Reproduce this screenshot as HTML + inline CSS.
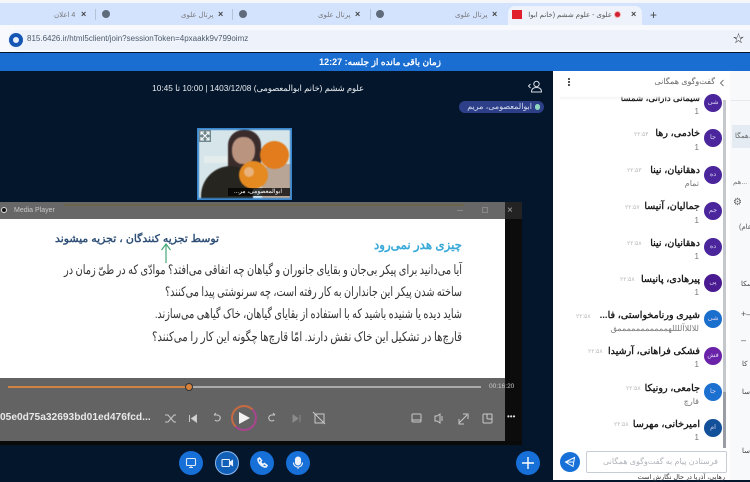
<!DOCTYPE html>
<html lang="fa"><head><meta charset="utf-8"><style>
*{box-sizing:border-box}
html,body{margin:0;padding:0;width:750px;height:480px;overflow:hidden;background:#04162c;font-family:"Liberation Sans","Noto Sans CJK SC",sans-serif}
.a{position:absolute}
.t{position:absolute;white-space:nowrap;line-height:1}
.r{direction:rtl;text-align:right}
.av{position:absolute;left:704px;width:18px;height:18px;border-radius:50%;background:#4b259c;color:#d8d0f0;font-size:6.5px;text-align:center;line-height:18px;direction:rtl}
.nm{position:absolute;right:50px;font-size:9.600px;font-weight:bold;color:#1d1d1d;direction:rtl;white-space:nowrap;line-height:11px}
.sub{position:absolute;right:51px;font-size:8px;color:#777;direction:rtl;white-space:nowrap;line-height:10px}
.tm{position:absolute;font-size:6px;color:#bbb;white-space:nowrap;line-height:8px}
.btn{position:absolute;top:451px;width:24px;height:24px;border-radius:50%;background:#1670d8}
.tab{position:absolute;font-size:7px;color:#777;direction:rtl;white-space:nowrap;top:11px;line-height:9px}
.x{position:absolute;top:9px;font-size:9px;color:#444;line-height:11px;font-weight:bold}
.g{position:absolute;top:10px;width:8px;height:8px;border-radius:50%;background:#5f6b7a}
.sep{position:absolute;top:9px;width:1px;height:11px;background:#b5c3d8}
</style></head><body>

<div class="a" style="left:0;top:0;width:750px;height:3px;background:#f4f6fa"></div>
<div class="a" style="left:0;top:3px;width:750px;height:22px;background:#d3e3fd"></div>
<div class="a" style="left:508px;top:6px;width:134px;height:20px;background:#eef3fb;border-radius:7px 7px 0 0"></div>
<div class="a" style="left:0;top:25px;width:750px;height:27px;background:#f7f9fd"></div>
<div class="a" style="left:8px;top:30px;width:742px;height:20px;background:#eef3fb;border-radius:10px 0 0 10px"></div>

<div class="tab" style="left:54px">4 اعلان</div><div class="x" style="left:81px">×</div><div class="g" style="left:102px"></div><div class="sep" style="left:95px"></div>
<div class="tab" style="left:181px">پرتال علوی</div><div class="x" style="left:218px">×</div><div class="g" style="left:239px"></div><div class="sep" style="left:232px"></div>
<div class="tab" style="left:318px">پرتال علوی</div><div class="x" style="left:355px">×</div><div class="g" style="left:376px"></div><div class="sep" style="left:370px"></div>
<div class="tab" style="left:455px">پرتال علوی</div><div class="x" style="left:492px">×</div>
<div class="a" style="left:512px;top:10px;width:10px;height:9px;background:#e0202c"></div>
<div class="tab" style="left:528px;color:#555;width:84px;overflow:hidden">علوی - علوم ششم (خانم ابوا</div>
<div class="a" style="left:614px;top:11px;width:7px;height:7px;border-radius:50%;background:#d02030;border:1.500px solid #f0b0b0"></div>
<div class="x" style="left:631px">×</div>
<div class="t" style="left:650px;top:9px;font-size:12px;color:#444">+</div>

<div class="a" style="left:9px;top:33px;width:14px;height:14px;border-radius:50%;background:#1657b5"></div>
<div class="a" style="left:13px;top:37px;width:6px;height:6px;border-radius:50%;background:#e8f0ff"></div>
<div class="t" style="left:27px;top:35px;font-size:8px;color:#4d5a6b">815.6426.ir/html5client/join?sessionToken=4pxaakk9v799oimz</div>
<div class="t" style="left:733px;top:34px;font-size:11px;color:#333">☆</div>

<div class="a" style="left:0;top:53px;width:750px;height:18px;background:#1a6ed2"></div>
<div class="t r" style="left:241px;width:200px;top:58px;font-size:9px;font-weight:bold;color:#fff">زمان باقی مانده از جلسه: 12:27</div>

<div class="t r" style="left:140px;width:224px;top:84px;font-size:8.300px;color:#e8ecf0">علوم ششم (خانم ابوالمعصومی) 1403/12/08 | 10:00 تا 10:45</div>
<svg class="a" style="left:527px;top:80px" width="16" height="14" viewBox="0 0 16 14" fill="none" stroke="#d5dbe3" stroke-width="1"><circle cx="9.500" cy="4" r="2.700"/><path d="M4.500 12c0-3 2-4.500 5-4.500s5 1.500 5 4.500zM3.500 4l-2 2 2 2"/></svg>
<div class="a" style="left:459px;top:101px;width:85px;height:12px;border-radius:6px;background:#2c3f88"></div>
<div class="t r" style="left:462px;width:70px;top:103px;font-size:8px;color:#d8def0">ابوالمعصومی، مریم</div>
<div class="a" style="left:535px;top:104px;width:5px;height:6px;border-radius:3px;background:#8fd8c0"></div>

<!-- Video tile -->
<div class="a" style="left:197px;top:128px;width:95px;height:72px;background:#3a86cc"></div>
<div class="a" style="left:199px;top:130px;width:91px;height:68px;background:#d5e5ea;overflow:hidden;filter:blur(.6px)">
  <div class="a" style="left:29px;top:0;width:33px;height:46px;border-radius:15px 15px 4px 4px;background:#3b2c2c"></div>
  <div class="a" style="left:33px;top:7px;width:23px;height:27px;border-radius:45%;background:#bb9480"></div>
  <div class="a" style="left:2px;top:36px;width:52px;height:36px;border-radius:30px 22px 0 0;background:#27251f"></div>
  <div class="a" style="left:63px;top:34px;width:28px;height:36px;border-radius:40% 0 0 0;background:#b9a596"></div>
  <div class="a" style="left:61px;top:11px;width:29px;height:28px;border-radius:50%;background:#e27c1c"></div>
  <div class="a" style="left:40px;top:31px;width:29px;height:28px;border-radius:50%;background:#e48a20"></div>
  <div class="a" style="left:45px;top:37px;width:10px;height:10px;border-radius:50%;background:#e9b27c"></div>
  <div class="a" style="left:5px;top:26px;width:24px;height:7px;background:#e4ecec"></div>
</div>
<svg class="a" style="left:199px;top:130px" width="12" height="12" fill="none" stroke="#fff" stroke-width="1.100"><rect width="12" height="12" fill="#6f8890" stroke="none"/><path d="M2 2l8 8M10 2l-8 8M2 5V2h3M7 2h3v3M2 7v3h3M7 10h3V7"/></svg>
<div class="a" style="left:228px;top:188px;width:62px;height:8px;background:rgba(0,0,0,.75)"></div>
<div class="t r" style="left:230px;width:52px;top:189px;font-size:6px;color:#fff">ابوالمعصومی، مر...</div>

<!-- Media player -->
<div class="a" style="left:0;top:202px;width:505px;height:17px;background:#676767"></div>
<div class="a" style="left:64px;top:204px;width:400px;height:2px;background:#6b634a"></div>
<div class="a" style="left:505px;top:202px;width:17px;height:17px;background:#232323"></div>
<div class="a" style="left:505px;top:219px;width:17px;height:226px;background:#0c0c0c"></div>
<div class="a" style="left:1px;top:207px;width:6px;height:6px;border-radius:50%;background:#111;border:1px solid #ddd"></div>
<div class="t" style="left:14px;top:207px;font-size:7px;color:#c8c8c8">Media Player</div>
<div class="t" style="left:507px;top:206px;font-size:10px;color:#aaa">×</div>
<div class="a" style="left:482px;top:207px;width:6px;height:6px;border:1px solid #888"></div>
<div class="a" style="left:457px;top:210px;width:6px;height:1px;background:#888"></div>

<div class="a" style="left:0;top:219px;width:505px;height:159px;background:#fff"></div>
<svg class="a" style="left:0;top:219px" width="505" height="159" viewBox="0 219 505 159" font-family="'Liberation Serif',serif" fill="#333" font-size="13">
  <text x="219" y="242" direction="rtl" textLength="164" lengthAdjust="spacingAndGlyphs" font-family="'Liberation Sans',sans-serif" font-weight="bold" font-size="10.500" fill="#2f4f77">توسط تجزیه کنندگان ، تجزیه میشوند</text>
  <text x="462" y="249" direction="rtl" textLength="88" lengthAdjust="spacingAndGlyphs" font-family="'Liberation Sans',sans-serif" font-weight="bold" font-size="12.500" fill="#38a9d8">چیزی هدر نمی‌رود</text>
  <text x="462" y="274" direction="rtl" textLength="398" lengthAdjust="spacingAndGlyphs">آیا می‌دانید برای پیکر بی‌جان و بقایای جانوران و گیاهان چه اتفاقی می‌افتد؟ موادّی که در طیّ زمان در</text>
  <text x="462" y="296" direction="rtl" textLength="297" lengthAdjust="spacingAndGlyphs">ساخته شدن پیکر این جانداران به کار رفته است، چه سرنوشتی پیدا می‌کنند؟</text>
  <text x="462" y="318" direction="rtl" textLength="307" lengthAdjust="spacingAndGlyphs">شاید دیده یا شنیده باشید که با استفاده از بقایای گیاهان، خاک گیاهی می‌سازند.</text>
  <text x="462" y="341" direction="rtl" textLength="310" lengthAdjust="spacingAndGlyphs">قارچ‌ها در تشکیل این خاک نقش دارند. امّا قارچ‌ها چگونه این کار را می‌کنند؟</text>
  <path d="M166 263V244M161.500 250 166 244l4.500 6" fill="none" stroke="#45a878" stroke-width="1.200"/>
</svg>

<div class="a" style="left:0;top:378px;width:505px;height:63px;background:#636363"></div>
<div class="a" style="left:0;top:441px;width:522px;height:4px;background:#0a0a0a"></div>
<div class="a" style="left:8px;top:386px;width:181px;height:2px;background:#d08240"></div>
<div class="a" style="left:189px;top:386px;width:292px;height:2px;background:#aaa"></div>
<div class="a" style="left:185px;top:383px;width:8px;height:8px;border-radius:50%;background:#d8823c;border:1px solid #333"></div>
<div class="t" style="left:489px;top:384px;font-size:6.500px;color:#ccc">00:16:20</div>
<div class="t" style="left:0;top:413px;font-size:10.200px;font-weight:bold;color:#e8e8e8">05e0d75a32693bd01ed476fcd...</div>

<svg class="a" style="left:160px;top:406px" width="360" height="26" viewBox="160 406 360 26" fill="none" stroke="#c8c8c8" stroke-width="1">
<path d="M165 415h3l6 7h2M165 422h3l6-7h2"/>
<path d="M189.500 415v7M196.500 415l-5 3.500 5 3.500z" fill="#d5d5d5"/>
<path d="M214 415h3a3 3 0 1 1-2 5M214 415l2-2"/>
<path d="M275 415h-3a3 3 0 1 0 2 5M275 415l-2-2"/>
<path d="M293 415l5 3.500-5 3.500z" fill="#8a8a8a" stroke="#8a8a8a"/><path d="M300 415v7" stroke="#8a8a8a"/>
<path d="M315 414h9v9h-9zM313 412l12 12"/>
<rect x="412" y="414" width="9" height="8" rx="1"/><path d="M412 420h9"/>
<path d="M435 416h2l3-2v9l-3-2h-2zM442 416v5"/>
<path d="M459 423l8-8M463 414h5v5M459 419v5h5"/>
<rect x="483" y="414" width="9" height="9" rx="1"/><rect x="487" y="414" width="5" height="5" rx="1"/>
</svg>
<div class="t" style="left:507px;top:413px;font-size:8px;color:#ddd">•••</div>

<div class="a" style="left:231px;top:405px;width:26px;height:26px;border-radius:50%;border:2.200px solid #c86a42;border-right-color:#a8458e;border-bottom-color:#a8458e"></div>
<svg class="a" style="left:238px;top:411px" width="14" height="14"><path d="M1 1 12 7 1 13z" fill="#f2f2f2"/></svg>

<div class="btn" style="left:179px"></div>
<svg class="a" style="left:185px;top:457px" width="12" height="12" fill="none" stroke="#dfe9f8" stroke-width="1.100"><rect x="1.500" y="1.500" width="9" height="7" rx="1"/><path d="M4 10.500h4M6 8.500v2"/></svg>
<div class="btn" style="left:215px;box-shadow:0 0 0 1px #8bb5e8 inset;background:#125fb8"></div>
<svg class="a" style="left:221px;top:458px" width="13" height="10" fill="none" stroke="#e8f0fb" stroke-width="1.100"><rect x="1" y="1.500" width="7.500" height="7" rx=".6"/><path d="M8.500 4.500l3-2v5l-3-2z" fill="#e8f0fb"/></svg>
<div class="btn" style="left:250px"></div>
<svg class="a" style="left:256px;top:457px" width="12" height="12" fill="none" stroke="#eef3fb" stroke-width="1.600"><path d="M2 2c0 4 4 8 8 8l1-1.500-2.500-2-1.500 1c-1-.5-2-1.500-2.500-2.500l1-1.500L3.500 1z"/></svg>
<div class="btn" style="left:286px"></div>
<svg class="a" style="left:292px;top:456px" width="12" height="14" fill="none" stroke="#eef3fb" stroke-width="1.100"><rect x="3.500" y="1" width="5" height="8" rx="2.500" fill="#eef3fb"/><path d="M1.500 6.500c0 6 9 6 9 0M6 11v2"/></svg>
<div class="btn" style="left:516px"></div>
<svg class="a" style="left:522px;top:457px" width="12" height="12" stroke="#fff" stroke-width="1.400"><path d="M6 0v12M0 6h12"/></svg>

<!-- Chat panel -->
<div class="a" style="left:553px;top:71px;width:197px;height:409px;background:#fff"></div>
<div class="a" style="left:730px;top:71px;width:20px;height:409px;background:#f8f9fb"></div>
<div class="a" style="left:730px;top:100px;width:20px;height:1px;background:#e6e9ee"></div>
<div class="a" style="left:732px;top:125px;width:18px;height:23px;background:#e4ebf3"></div>
<div class="a" style="left:568px;top:78px;width:2px;height:2px;background:#555"></div>
<div class="a" style="left:568px;top:81px;width:2px;height:2px;background:#555"></div>
<div class="a" style="left:568px;top:84px;width:2px;height:2px;background:#555"></div>
<div class="t r" style="left:610px;width:105px;top:78px;font-size:8px;color:#666">گفت‌وگوی همگانی</div>
<svg class="a" style="left:719px;top:79px" width="6" height="8" fill="none" stroke="#777"><path d="M4.500 1 1.500 4l3 3"/></svg>

<div class="a" style="left:723px;top:100px;width:3px;height:348px;background:#c4c7cc"></div>
<div class="a" style="left:723px;top:392px;width:3px;height:56px;background:#9a9da3"></div>

<div class="av" style="top:94px">شی</div>
<div class="nm" style="top:93px;font-size:8.600px">سیمانی دارانی، شمسا</div>
<div class="a" style="left:560px;top:90px;width:143px;height:10px;background:linear-gradient(#fff 62%,rgba(235,235,235,.5) 75%,rgba(255,255,255,0))"></div>
<div class="sub" style="top:107px">1</div>

<div class="av" style="top:129px">جا</div><div class="nm" style="top:128px">خادمی، رها</div><div class="tm" style="left:634px;top:131px">۲۲:۵۴</div><div class="sub" style="top:143px">1</div>
<div class="av" style="top:166px">ده</div><div class="nm" style="top:165px">دهقانیان، نینا</div><div class="tm" style="left:627px;top:167px">۲۲:۵۳</div><div class="sub" style="top:179px">تمام</div>
<div class="av" style="top:202px">جم</div><div class="nm" style="top:201px">جمالیان، آنیسا</div><div class="tm" style="left:625px;top:204px">۲۲:۵۷</div><div class="sub" style="top:216px">1</div>
<div class="av" style="top:238px">ده</div><div class="nm" style="top:238px">دهقانیان، نینا</div><div class="tm" style="left:627px;top:240px">۲۲:۵۸</div><div class="sub" style="top:252px">1</div>
<div class="av" style="top:274px;background:#4a1a90">پی</div><div class="nm" style="top:274px">پیرهادی، پانیسا</div><div class="tm" style="left:620px;top:276px">۲۲:۵۸</div><div class="sub" style="top:288px">1</div>
<div class="av" style="top:310px;background:#1b6fcc">شی</div><div class="nm" style="top:310px">شیری ورنامخواستی، فا...</div><div class="tm" style="left:576px;top:313px">۲۲:۵۸</div><div class="sub" style="top:324px">للاللاآللللهمممممممممممق</div>
<div class="av" style="top:347px;background:#6a22a8">فش</div><div class="nm" style="top:346px">فشکی فراهانی، آرشیدا</div><div class="tm" style="left:588px;top:348px">۲۲:۵۸</div><div class="sub" style="top:360px">1</div>
<div class="av" style="top:383px;background:#1b70d0">جا</div><div class="nm" style="top:383px">جامعی، رونیکا</div><div class="tm" style="left:626px;top:385px">۲۲:۵۸</div><div class="sub" style="top:397px">قارچ</div>
<div class="av" style="top:419px;background:#12509a">ام</div><div class="nm" style="top:419px">امیرخانی، مهرسا</div><div class="tm" style="left:614px;top:421px">۲۲:۵۸</div><div class="sub" style="top:433px">1</div>

<div class="a" style="left:560px;top:452px;width:20px;height:20px;border-radius:50%;background:#1670d8"></div>
<svg class="a" style="left:564px;top:456px" width="12" height="12" fill="none" stroke="#fff"><path d="M1.500 6 10.500 1.500 9 10.500zM1.500 6 9 6"/></svg>
<div class="a" style="left:586px;top:451px;width:141px;height:22px;background:#fff;border:1px solid #c7ccd5;border-radius:2px"></div>
<div class="t r" style="left:600px;width:118px;top:458px;font-size:8px;color:#b0b4bb">فرستادن پیام به گفت‌وگوی همگانی</div>
<div class="t r" style="left:630px;width:95px;top:475px;font-size:6.500px;color:#333">رهایی، آذریا در حال نگارش است</div>

<!-- Clipped far-right column -->
<div class="t" style="left:735px;top:133px;font-size:7px;color:#666">همگا...</div>
<div class="t" style="left:733px;top:179px;font-size:7px;color:#777">هم...</div>
<div class="t" style="left:733px;top:198px;font-size:10px;color:#666">⚙</div>
<div class="t" style="left:739px;top:224px;font-size:7px;color:#555">(عام</div>
<div class="t" style="left:741px;top:281px;font-size:7px;color:#444">سکا</div>
<div class="t" style="left:741px;top:310px;font-size:9px;color:#555">+–</div>
<div class="t" style="left:741px;top:336px;font-size:9px;color:#555">–</div>
<div class="t" style="left:742px;top:361px;font-size:7px;color:#444">کا</div>
<div class="t" style="left:742px;top:389px;font-size:7px;color:#444">سا</div>
<div class="t" style="left:742px;top:448px;font-size:7px;color:#444">سا</div>
</body></html>
